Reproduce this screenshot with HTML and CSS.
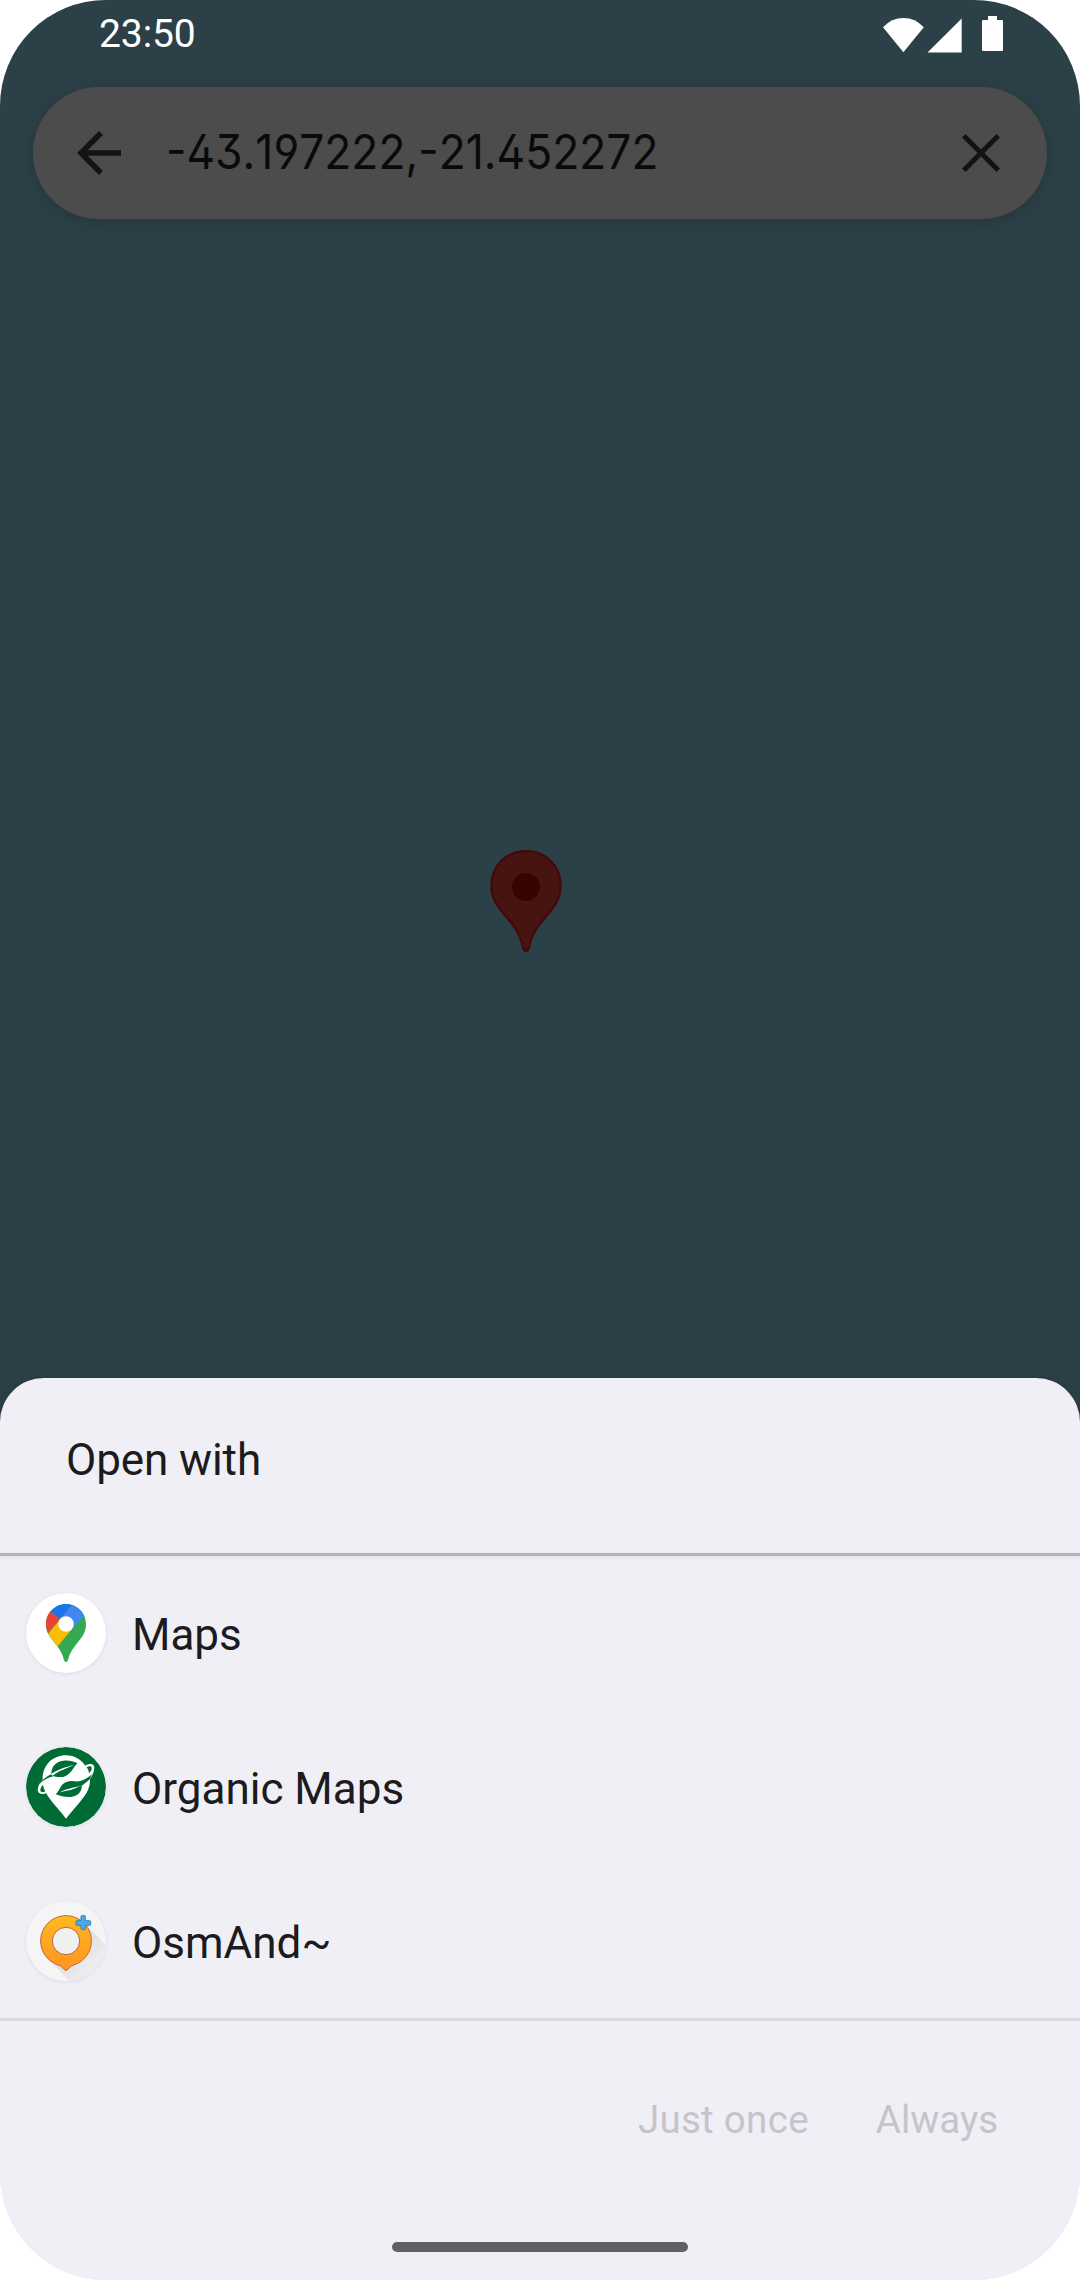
FILE: index.html
```html
<!DOCTYPE html>
<html lang="en">
<head>
<meta charset="utf-8">
<title>Open with</title>
<link rel="stylesheet" href="styles.css">
</head>
<body>
<div class="screen">
  <header class="status">
    <span class="clock">23:50</span>
    <svg class="status-icons" width="84" height="38" viewBox="0 0 84 38" fill="#fff">
      <path d="M0 11.300Q8.500 2 20.400 2Q32.300 2 40.800 11.300L20.400 36.300Z"/>
      <path d="M44.500 36.500L78.700 2.500V36.500Z"/>
    </svg>
    <svg class="battery" width="21" height="35" viewBox="0 0 21 35" fill="#fff">
      <path d="M6 0h9v4h5q1 0 1 1v29q0 1-1 1H1q-1 0-1-1V5q0-1 1-1h5z"/>
    </svg>
  </header>

  <div class="search">
    <svg class="back" width="44" height="44" viewBox="0 0 44 44" fill="none" stroke="#111315" stroke-width="5.600">
      <path d="M44 22H4M24 2L4 22l20 20"/>
    </svg>
    <span class="query">-43.197222,-21.452272</span>
    <svg class="clear" width="38" height="38" viewBox="0 0 38 38" fill="none" stroke="#111315" stroke-width="5">
      <path d="M1.800 1.800l34.400 34.400M36.200 1.800L1.800 36.200"/>
    </svg>
  </div>

  <main class="map">
    <svg class="pin" width="72" height="102" viewBox="60 60 216 306">
      <path d="M168 63C110 63 64 108 64 166C64 200 77 222 97 246C123 277 148 304 156 340C158 348 159 363 168 363C177 363 178 348 180 340C188 304 213 277 239 246C259 222 272 200 272 166C272 108 226 63 168 63Z" fill="#461411" stroke="#420a09" stroke-width="7"/>
      <circle cx="168" cy="171" r="42" fill="#380402"/>
    </svg>
  </main>

  <section class="sheet">
    <h1 class="title">Open with</h1>
    <ul class="apps">
      <li class="app">
        <svg class="icon" viewBox="48 39 240 240">
          <defs>
            <clipPath id="gpin"><path d="M168 72C135 72 108 99 108 132C108 154 117 168 130 184C144 202 157 216 161 238C163 243 164 246 168 246C172 246 173 243 175 238C180 216 192 202 206 184C219 168 228 154 228 132C228 99 201 72 168 72Z"/></clipPath>
          </defs>
          <circle cx="168" cy="159" r="120" fill="#fff"/>
          <g clip-path="url(#gpin)">
            <rect x="100" y="60" width="140" height="200" fill="#34a853"/>
            <path d="M100 178L150 118L186 147L142 200L120 210Z" fill="#fbbc04"/>
            <path d="M100 176L150 117L122 94L100 80Z" fill="#ea4335"/>
            <path d="M122 94L150 118L188 73L160 60Z" fill="#1a73e8"/>
            <path d="M188 73L150 118L186 148L222 106L240 60Z" fill="#4285f4"/>
          </g>
          <circle cx="168" cy="132" r="23.500" fill="#fff"/>
        </svg>
        <span class="name">Maps</span>
      </li>
      <li class="app">
        <svg class="icon" viewBox="48 51 240 240">
          <circle cx="168" cy="171" r="120" fill="#006c35"/>
          <path d="M98 149C97 106 128 76 168 76C194 76 214 89 226 107C238 100 250 101 252 109C255 120 249 134 240 147C240 187 222 201 168 266C143 233 119 211 109 190C97 194 86 192 84 184C81 173 88 159 98 149Z" fill="#fff"/>
          <path d="M90 158C122 122 160 124 194 105C181 125 172 140 153 141C140 142 132 136 126 140C112 143 99 152 90 161Z" fill="#006c35"/>
          <path d="M124 137C122 111 137 94 160 92C177 90 188 94 202 99C191 111 183 134 160 140C148 143 138 136 124 137Z" fill="#006c35"/>
          <path d="M122 133C145 117 165 112 192 104C169 117 145 121 128 137" fill="#fff"/>
          <path d="M137 193C150 181 151 161 171 155C188 150 198 157 211 153C224 149 235 143 246 132L239 148C230 157 221 163 215 168C216 184 204 200 182 201C164 202 151 198 137 193Z" fill="#006c35"/>
          <path d="M149 187C171 182 193 180 213 166C194 174 171 175 149 187Z" fill="#fff"/>
          <path d="M230 112C237 108 244 108 245 113C246 119 242 125 237 130C237 124 234 118 230 112Z" fill="#006c35"/>
          <path d="M99 164C92 171 89 180 92 184C94 188 100 187 106 184C102 178 100 171 99 164Z" fill="#006c35"/>
        </svg>
        <span class="name">Organic Maps</span>
      </li>
      <li class="app">
        <svg class="icon" viewBox="48 48 240 240">
          <defs>
            <linearGradient id="orange" x1="0" y1="0" x2="0" y2="1"><stop offset="0" stop-color="#ffb922"/><stop offset="1" stop-color="#ff9420"/></linearGradient>
            <linearGradient id="shade" gradientUnits="userSpaceOnUse" x1="185" y1="185" x2="240" y2="240"><stop offset="0" stop-color="#dcdcdc"/><stop offset="1" stop-color="#ececec"/></linearGradient>
            <clipPath id="disc"><circle cx="168" cy="168" r="120"/></clipPath>
          </defs>
          <circle cx="168" cy="168" r="120" fill="#f5f5f5"/>
          <path d="M115 222L223 115L320 212L215 325Z" fill="url(#shade)" clip-path="url(#disc)"/>
          <circle cx="168" cy="168" r="43" fill="#f0f0f0"/>
          <path fill-rule="evenodd" d="M168 92C126 92 92 126 92 168C92 202 114 230 145 240C156 243 160 253 168 257C176 253 180 243 191 240C222 230 244 202 244 168C244 126 210 92 168 92ZM168 127A41 41 0 1 1 168 209A41 41 0 1 1 168 127Z" fill="url(#orange)" stroke="#bd6534" stroke-width="3"/>
          <path d="M215 92h9q2 0 2 2v13h13q3 0 3 3v8q0 3-3 3h-13v10q0 3-3 3h-7q-3 0-3-3v-10h-12q-3 0-3-3v-8q0-3 3-3h12v-12q0-3 2-3z" fill="#43adf2" stroke="#397fab" stroke-width="3"/>
        </svg>
        <span class="name">OsmAnd~</span>
      </li>
    </ul>
    <div class="actions">
      <span class="action">Just once</span>
      <span class="action">Always</span>
    </div>
    <div class="home"></div>
  </section>
</div>
</body>
</html>
```
FILE: styles.css
```css
* { box-sizing: border-box; }

body {
  margin: 0;
  background: #fff;
  font-family: Roboto, "Liberation Sans", sans-serif;
}

.screen {
  display: flex;
  flex-direction: column;
  width: 1080px;
  height: 2280px;
  overflow: hidden;
  border-radius: 106px;
  background: linear-gradient(#2c4047 1500px, #f0eff6 1500px);
}

.status {
  display: flex;
  align-items: flex-start;
  height: 87px;
  padding: 16px 77px 0 99px;
}

.clock {
  flex: 1;
  padding-top: 1px;
  color: #fff;
  font-size: 39px;
  line-height: 34px;
  letter-spacing: -0.1px;
}

.status-icons { margin-right: 15px; }

.search {
  display: flex;
  align-items: center;
  height: 132px;
  margin: 0 33px;
  padding: 0 47px 0 44px;
  border-radius: 66px;
  background: #4c4c4c;
  box-shadow: 0 3px 18px rgba(0, 0, 0, 0.16);
}

.back { margin-right: 45px; }

.query {
  flex: 1;
  padding-bottom: 2px;
  color: #0a0a0a;
  font-family: Inter, "Liberation Sans", sans-serif;
  font-size: 47.500px;
  line-height: 60px;
  font-feature-settings: "ss01";
  font-kerning: none;
  transform: scaleX(0.934);
  transform-origin: left;
  white-space: nowrap;
}

.map {
  display: flex;
  justify-content: center;
  flex: 1;
  padding: 631px 28px 0 0;
}

.sheet {
  display: flex;
  flex-direction: column;
  height: 902px;
  border-radius: 44px 44px 0 0;
  background: #f0eff6;
  box-shadow: 0 0 14px rgba(0, 0, 0, 0.12);
  color: #1b1b20;
}

.title {
  height: 175px;
  margin: 0;
  padding: 54px 66px 0;
  font-size: 44px;
  line-height: 56px;
  font-weight: 400;
  letter-spacing: -0.1px;
}

.apps {
  margin: 0;
  padding: 0;
  list-style: none;
  border-top: 3px solid #b5b4ba;
  border-bottom: 3px solid #d8d7dd;
  background: linear-gradient(#e6e5ec, #f0eff6 5px);
}

.app {
  display: flex;
  align-items: center;
  gap: 26px;
  height: 154px;
  padding-left: 26px;
}

.icon {
  width: 80px;
  height: 80px;
  border-radius: 50%;
  box-shadow: 0 1px 4px rgba(0, 0, 0, 0.08);
}

.name {
  padding-top: 3px;
  font-size: 44px;
  line-height: 56px;
}

.actions {
  display: flex;
  justify-content: flex-end;
  gap: 67px;
  padding: 73px 82px 0 0;
  color: #c5c4cb;
  font-size: 38.500px;
  line-height: 52px;
}

.action:first-child { letter-spacing: 0.3px; }

.home {
  width: 296px;
  height: 10px;
  margin: auto auto 28px;
  border-radius: 5px;
  background: #606062;
}
```
